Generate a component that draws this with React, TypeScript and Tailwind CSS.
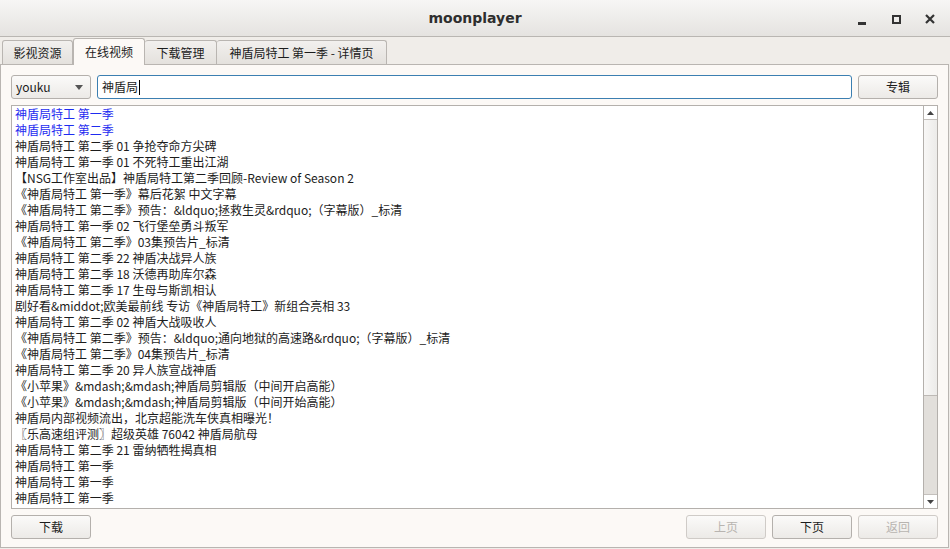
import React from "react";

const rows: { t: string; blue?: boolean }[] = [
  { t: "神盾局特工 第一季", blue: true },
  { t: "神盾局特工 第二季", blue: true },
  { t: "神盾局特工 第二季 01 争抢夺命方尖碑" },
  { t: "神盾局特工 第一季 01 不死特工重出江湖" },
  { t: "【NSG工作室出品】神盾局特工第二季回顾-Review of Season 2" },
  { t: "《神盾局特工 第一季》幕后花絮 中文字幕" },
  { t: "《神盾局特工 第二季》预告：&ldquo;拯救生灵&rdquo;（字幕版）_标清" },
  { t: "神盾局特工 第一季 02 飞行堡垒勇斗叛军" },
  { t: "《神盾局特工 第二季》03集预告片_标清" },
  { t: "神盾局特工 第二季 22 神盾决战异人族" },
  { t: "神盾局特工 第二季 18 沃德再助库尔森" },
  { t: "神盾局特工 第二季 17 生母与斯凯相认" },
  { t: "剧好看&middot;欧美最前线 专访《神盾局特工》新组合亮相 33" },
  { t: "神盾局特工 第二季 02 神盾大战吸收人" },
  { t: "《神盾局特工 第二季》预告：&ldquo;通向地狱的高速路&rdquo;（字幕版）_标清" },
  { t: "《神盾局特工 第二季》04集预告片_标清" },
  { t: "神盾局特工 第二季 20 异人族宣战神盾" },
  { t: "《小苹果》&mdash;&mdash;神盾局剪辑版（中间开启高能）" },
  { t: "《小苹果》&mdash;&mdash;神盾局剪辑版（中间开始高能）" },
  { t: "神盾局内部视频流出，北京超能洗车侠真相曝光！" },
  { t: "〖乐高速组评测〗超级英雄 76042 神盾局航母" },
  { t: "神盾局特工 第二季 21 雷纳牺牲揭真相" },
  { t: "神盾局特工 第一季" },
  { t: "神盾局特工 第一季" },
  { t: "神盾局特工 第一季" },
];

const font = { fontFamily: '"Noto Sans CJK SC", "DejaVu Sans", sans-serif' };

function Btn({ label, disabled }: { label: string; disabled?: boolean }) {
  return (
    <div
      className={
        "w-[80px] h-[24px] flex items-center justify-center rounded-[3px] border text-[12px] leading-none bg-gradient-to-b from-[#fbfaf9] to-[#eceae7] " +
        (disabled ? "border-[#cfcbc7] text-[#b8b4b0]" : "border-[#b4b0ac] text-[#1c1c1c]")
      }
    >
      {label}
    </div>
  );
}

export default function App() {
  return (
    <div className="w-[950px] h-[549px] bg-[#f0ede9] flex flex-col overflow-hidden text-[#1c1c1c]" style={font}>
      {/* title bar */}
      <div className="h-[37px] shrink-0 relative flex items-center justify-center bg-gradient-to-b from-[#f7f6f5] to-[#e5e3e0] border-b border-[#b9b6b2]">
        <span className="text-[14px] font-bold text-[#2e2e2e] leading-none" style={{ fontFamily: '"DejaVu Sans", sans-serif' }}>
          moonplayer
        </span>
        <div className="absolute right-[13px] top-[13px] flex items-center gap-[20px]">
          <div className="w-[14px] h-[12px] flex items-end justify-center">
            <div className="w-[8px] h-[3px] bg-[#333]" />
          </div>
          <div className="w-[14px] h-[12px] flex items-center justify-center">
            <div className="w-[9px] h-[9px] border-[2.5px] border-[#333]" />
          </div>
          <svg width="14" height="12" viewBox="0 0 14 12">
            <path d="M3 2 L11 10 M11 2 L3 10" stroke="#333" strokeWidth="2.2" />
          </svg>
        </div>
      </div>

      {/* tabs */}
      <div className="h-[27px] shrink-0 flex items-end pl-[2px] text-[12px]">
        <div className="h-[24px] w-[71px] flex items-center justify-center border border-b-0 border-[#b9b5b1] rounded-t-[3px] bg-gradient-to-b from-[#f2f0ee] to-[#e4e1dd]">
          影视资源
        </div>
        <div className="h-[27px] w-[72px] flex items-center justify-center border border-b-0 border-[#b9b5b1] rounded-t-[3px] bg-[#fcf9f6] relative top-[1px] z-10">
          在线视频
        </div>
        <div className="h-[24px] w-[72px] flex items-center justify-center border border-b-0 border-l-0 border-[#b9b5b1] rounded-t-[3px] bg-gradient-to-b from-[#f2f0ee] to-[#e4e1dd]">
          下载管理
        </div>
        <div className="h-[24px] w-[170px] flex items-center justify-center border border-b-0 border-l-0 border-[#b9b5b1] rounded-t-[3px] bg-gradient-to-b from-[#f2f0ee] to-[#e4e1dd]">
          神盾局特工 第一季 - 详情页
        </div>
      </div>

      {/* panel */}
      <div className="h-[484px] shrink-0 mr-[1px] border border-[#b9b5b1] bg-[#fcf9f6] flex flex-col px-[10px] pt-[10px]">
        <div className="flex items-center h-[24px] gap-[6px]">
          <div className="w-[80px] h-[24px] flex items-center justify-between pl-[4px] pr-[7px] rounded-[3px] border border-[#b4b0ac] bg-gradient-to-b from-[#fbfaf9] to-[#eceae7] text-[12px]">
            <span>youku</span>
            <svg width="8" height="5" viewBox="0 0 8 5">
              <path d="M0 0 L8 0 L4 5 Z" fill="#555" />
            </svg>
          </div>
          <div className="flex-1 h-[24px] flex items-center pl-[4px] rounded-[3px] border border-[#3c7fb1] bg-white text-[12px]">
            <span>神盾局</span>
            <span className="w-[1px] h-[15px] bg-black ml-[1px]" />
          </div>
          <Btn label="专辑" />
        </div>

        <div className="mt-[6px] h-[404px] border border-[#b4b0ac] bg-white flex">
          <div className="flex-1 pl-[3px] text-[12px] leading-[15px] overflow-hidden">
            {rows.map((r, i) => (
              <div key={i} className={"h-[16px] whitespace-nowrap " + (r.blue ? "text-[#1e2cf0]" : "text-[#1c1c1c]")}>
                {r.t}
              </div>
            ))}
          </div>
          <div className="w-[14px] border-l border-[#b4b0ac] flex flex-col bg-[#e2dfdb]">
            <div className="h-[14px] bg-white border-b border-[#c4c0bc] flex items-center justify-center">
              <svg width="7" height="4" viewBox="0 0 7 4">
                <path d="M0 4 L7 4 L3.5 0 Z" fill="#444" />
              </svg>
            </div>
            <div className="h-[276px] bg-gradient-to-r from-[#f8f7f6] to-[#ecebe9] border-b border-[#bdb9b5]" />
            <div className="flex-1" />
            <div className="h-[14px] bg-white border-t border-[#c4c0bc] flex items-center justify-center">
              <svg width="7" height="4" viewBox="0 0 7 4">
                <path d="M0 0 L7 0 L3.5 4 Z" fill="#444" />
              </svg>
            </div>
          </div>
        </div>

        <div className="mt-[6px] flex items-center h-[24px]">
          <Btn label="下载" />
          <div className="flex-1" />
          <div className="flex gap-[6px]">
            <Btn label="上页" disabled />
            <Btn label="下页" />
            <Btn label="返回" disabled />
          </div>
        </div>
      </div>
    </div>
  );
}
